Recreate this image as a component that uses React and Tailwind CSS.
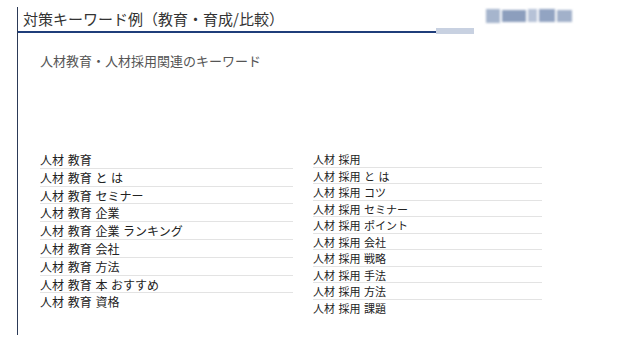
import React from 'react';

const educationWords = [
  '人材 教育',
  '人材 教育 と は',
  '人材 教育 セミナー',
  '人材 教育 企業',
  '人材 教育 企業 ランキング',
  '人材 教育 会社',
  '人材 教育 方法',
  '人材 教育 本 おすすめ',
  '人材 教育 資格',
];

const hiringWords = [
  '人材 採用',
  '人材 採用 と は',
  '人材 採用 コツ',
  '人材 採用 セミナー',
  '人材 採用 ポイント',
  '人材 採用 会社',
  '人材 採用 戦略',
  '人材 採用 手法',
  '人材 採用 方法',
  '人材 採用 課題',
];

const App = () => {
  return (
    <div
      className="w-[621px] h-[344px] bg-white pt-[7px] pl-[17px] overflow-hidden"
      style={{ fontFamily: '"Noto Sans CJK JP", "Noto Sans", sans-serif' }}
    >
      <div className="h-[328px] border-l border-[#2c3a57]">
        {/* Header */}
        <div className="flex items-end h-[26px]">
          <div className="w-[418px] h-full border-b-2 border-[#1f3d7a] pl-[5px] pt-[1px] text-[15px] leading-[21px] text-[#333]">
            対策キーワード例（教育・育成/比較）
          </div>
          <div className="w-[38px] h-[6px] mb-[-1px] bg-[#c8d1e1] blur-[0.6px]" />
          {/* blurred logo */}
          <div className="self-start ml-[12px] mt-[1px] flex items-center gap-[2px] h-[15px] blur-[1.2px]">
            <span className="w-[14px] h-[14px] bg-[#a6b5cd]" />
            <span className="w-[24px] h-[12px] bg-[#8c9ebd]" />
            <span className="w-[9px] h-[13px] bg-[#b6c2d7]" />
            <span className="w-[16px] h-[13px] bg-[#92a4c2]" />
            <span className="w-[15px] h-[12px] bg-[#a2b1ca]" />
          </div>
        </div>

        {/* Subtitle */}
        <div className="mt-[19px] pl-[22px] text-[13px] leading-[18px] text-[#555]">
          人材教育・人材採用関連のキーワード
        </div>

        {/* Keyword lists */}
        <div className="mt-[81px] pl-[22px] flex gap-[20px]">
          <ul className="w-[253px]">
            {educationWords.map((w, i) => (
              <li
                key={w}
                className={`h-[17.8px] text-[12px] leading-[17px] text-[#222] [word-spacing:1px] ${
                  i < educationWords.length - 1 ? 'border-b border-[#e3e3e3]' : ''
                }`}
              >
                {w}
              </li>
            ))}
          </ul>
          <ul className="w-[229px]">
            {hiringWords.map((w, i) => (
              <li
                key={w}
                className={`h-[16.5px] text-[11px] leading-[16px] text-[#222] [word-spacing:1px] ${
                  i < hiringWords.length - 1 ? 'border-b border-[#e3e3e3]' : ''
                }`}
              >
                {w}
              </li>
            ))}
          </ul>
        </div>
      </div>
    </div>
  );
};

export default App;
